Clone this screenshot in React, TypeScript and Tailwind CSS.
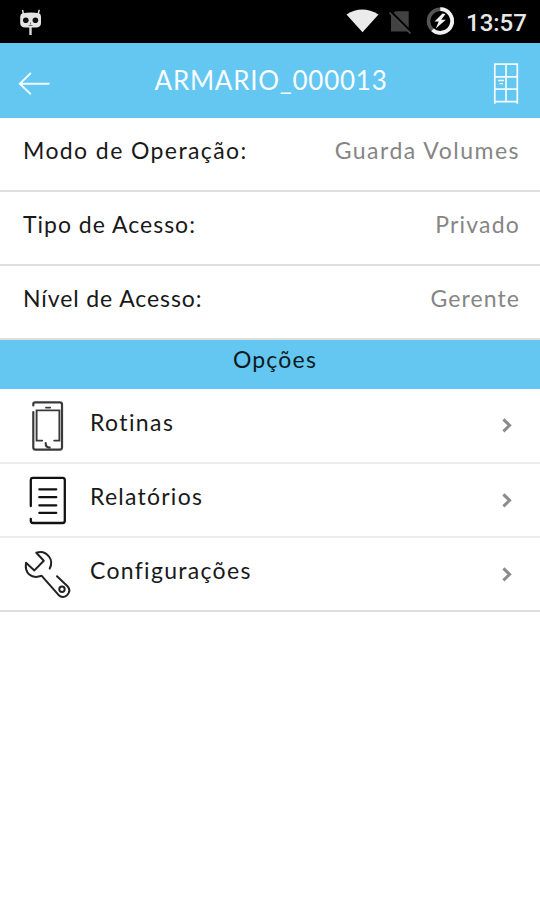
import clsx from "clsx";
import type { ReactNode } from "react";

type Detail = {
  label: string;
  value: string;
  labelSpacing: string;
  valueSpacing: string;
};

type Option = {
  label: string;
  icon: ReactNode;
  row: string;
  spacing: string;
};

const DETAILS: Detail[] = [
  {
    label: "Modo de Operação:",
    value: "Guarda Volumes",
    labelSpacing: "tracking-[1.4px]",
    valueSpacing: "tracking-[1.5px]",
  },
  {
    label: "Tipo de Acesso:",
    value: "Privado",
    labelSpacing: "tracking-[1px]",
    valueSpacing: "tracking-[1.2px]",
  },
  {
    label: "Nível de Acesso:",
    value: "Gerente",
    labelSpacing: "tracking-[0.9px]",
    valueSpacing: "tracking-[1.1px]",
  },
];

const OPTIONS: Option[] = [
  {
    label: "Rotinas",
    icon: <PhoneIcon />,
    row: "h-[75px] border-[#ededed]",
    spacing: "pt-[19px] tracking-[1.4px]",
  },
  {
    label: "Relatórios",
    icon: <ReportIcon />,
    row: "h-[74px] border-[#ededed]",
    spacing: "pt-[18px] tracking-[1.25px]",
  },
  {
    label: "Configurações",
    icon: <WrenchIcon />,
    row: "h-[74px] border-[#dedede]",
    spacing: "pt-[18px] tracking-[1.3px]",
  },
];

function PhoneIcon() {
  return (
    <svg viewBox="10 389 80 73" className="h-[73px] w-20" fill="none" stroke="#3a3a3a" strokeLinecap="round">
      <path d="M33.3 405.5V404q0-1.7 2-1.7h24.5q2.2 0 2.2 2v43.3q0 2-2 2H35.3q-2 0-2-2V412" strokeWidth="2.2" />
      <path d="M42.2 440.6h-5.6V410.4h22.8v30.2h-5.2" strokeWidth="1.9" />
      <path d="M46 407.6h4.2" strokeWidth="1.8" />
      <path d="M45.7 443.2q0 4.2 4 4.4" strokeWidth="2.2" />
    </svg>
  );
}

function ReportIcon() {
  return (
    <svg viewBox="10 464 80 72" className="h-[72px] w-20" fill="none" stroke="#111" strokeLinecap="round">
      <path d="M30.8 506V480q0-2.2 2.2-2.2h29.6q2.2 0 2.2 2.2v40.8q0 2.2-2.2 2.2H33q-2.2 0-2.2-2.2v-2" strokeWidth="2.3" />
      <path d="M39.3 489.3h17M39.3 497.2h17M39.3 505.3h17M39.3 512.8h17" strokeWidth="2.2" />
    </svg>
  );
}

function WrenchIcon() {
  return (
    <svg
      viewBox="10 538 80 72"
      className="h-[72px] w-20"
      fill="none"
      stroke="#222"
      strokeWidth="2"
      strokeLinecap="round"
      strokeLinejoin="round"
    >
      <path d="M49.7 568.5Q53 562 49.3 557Q44 550 36.3 552.8L43.8 560.8L34.4 570.4L26 562.8C24.5 573 31 579.5 41.7 575.8L58.3 594.7Q62.5 599 67 595.2Q71.5 590.5 67.5 586.2L57 576.2" />
      <circle cx="62" cy="589.2" r="2.7" />
    </svg>
  );
}

function LockerIcon() {
  return (
    <svg viewBox="492 62 28 43" className="h-[43px] w-7" fill="none" stroke="#f2fbff" strokeWidth="1.7">
      <path d="M494.8 103.7V64.2h22.5v39.5M506 64.2v37.3M494.8 76.8h22.5M494.8 89.2h22.5M494.8 101.6h22.5" />
      <path d="M498 80.5h6M499.5 83.6h3.5" strokeWidth="1.4" />
    </svg>
  );
}

function StatusBar() {
  return (
    <div className="flex h-[43px] items-center justify-between bg-black">
      {/* CyanogenMod mascot */}
      <svg viewBox="0 0 60 43" className="h-[43px] w-[60px]">
        <path d="M23.5 14.5L22.5 9.8M38 14.5L39.3 9.8" stroke="#ddd" strokeWidth="1.5" />
        <path d="M22.5 13.3Q31 11.8 39 13.3Q41 14 41 17V23Q41 27.3 36 27.5H25.5Q20.2 27.3 20.2 23V17Q20.2 14 22.5 13.3Z" fill="#e5e5e5" />
        <path d="M30.5 27v8" stroke="#ddd" strokeWidth="2.4" />
        <circle cx="25.8" cy="20.2" r="2.8" fill="#111" />
        <circle cx="35.4" cy="20.2" r="2.8" fill="#111" />
        <path d="M30.5 22.5v2M28.5 25.5h4" stroke="#555" strokeWidth=".8" />
      </svg>
      <div className="flex items-center pr-[14px]">
        <svg viewBox="340 0 120 43" className="h-[43px] w-[120px]" fill="none">
          <path d="M346.5 14.4Q362 4.8 378.5 14.4L362.5 32.3Z" fill="#ebebeb" />
          <path d="M391 15L395.5 11.2H408.7V31.5H391Z" fill="#424242" />
          <path d="M390.5 11.5L412 33" stroke="#000" strokeWidth="2.5" />
          <path d="M389.5 12.6L410.5 33.3" stroke="#484848" strokeWidth="1.7" />
          <circle cx="440.3" cy="21" r="11.8" stroke="#555" strokeWidth="3.6" />
          <path d="M440.3 9.2A11.8 11.8 0 1 1 432.5 29.8" stroke="#f2f2f2" strokeWidth="3.8" />
          <path d="M442.5 13.5L434.5 21.5H438.7L435.8 28.5L445.8 19.7H441.2L445.5 14Z" fill="#f2f2f2" />
        </svg>
        <span className="ml-[6px] mt-[3px] w-[60px] whitespace-nowrap font-[Roboto] text-[24px] font-medium leading-[28px] text-[#e8e8e8]">
          13:57
        </span>
      </div>
    </div>
  );
}

function DetailRow({ label, value, labelSpacing, valueSpacing }: Detail) {
  return (
    <div className="flex h-[74px] justify-between border-b-2 border-[#dedede] pl-[23px] pr-5 pt-[18px] text-[23px] leading-[28px]">
      <span className={clsx("text-[#191919]", labelSpacing)}>{label}</span>
      <span className={clsx("text-[#858585]", valueSpacing)}>{value}</span>
    </div>
  );
}

function OptionRow({ label, icon, row, spacing }: Option) {
  return (
    <div className={clsx("flex border-b-2 pl-[10px] pr-[27px]", row)}>
      {icon}
      <span className={clsx("text-[23px] leading-[28px] text-[#191919]", spacing)}>{label}</span>
      <svg viewBox="0 0 12 16" className="ml-auto mt-[28px] h-4 w-3" fill="none" stroke="#8c8c8c" strokeWidth="3">
        <path d="M2.4 2.3L8.6 8.3L2.4 14.3" />
      </svg>
    </div>
  );
}

export default function App() {
  return (
    <div className="flex h-[900px] w-[540px] flex-col overflow-hidden bg-white font-[Lato,sans-serif]">
      <StatusBar />
      <header className="flex h-[75px] items-center justify-between bg-[#64c7f2] pl-[18px] pr-5">
        <svg viewBox="18 70 34 27" className="mt-[6px] h-[27px] w-[34px]" fill="none" stroke="#f2fbff" strokeWidth="1.9">
          <path d="M49.5 83.7H19.8M30.8 73L19.8 83.7L30.8 94.3" />
        </svg>
        <h1 className="-ml-[2px] -mt-[2px] text-[26px] leading-[32px] tracking-[0.75px] text-[#f7fcff]">
          ARMARIO_000013
        </h1>
        <div className="mt-[6px]">
          <LockerIcon />
        </div>
      </header>
      <section>
        {DETAILS.map((detail) => (
          <DetailRow key={detail.label} {...detail} />
        ))}
      </section>
      <h2 className="h-[49px] bg-[#64c7f2] pl-[10px] pt-[5px] text-center text-[23px] leading-[28px] tracking-[1.2px] text-[#0d1a20]">
        Opções
      </h2>
      <nav>
        {OPTIONS.map((option) => (
          <OptionRow key={option.label} {...option} />
        ))}
      </nav>
    </div>
  );
}
